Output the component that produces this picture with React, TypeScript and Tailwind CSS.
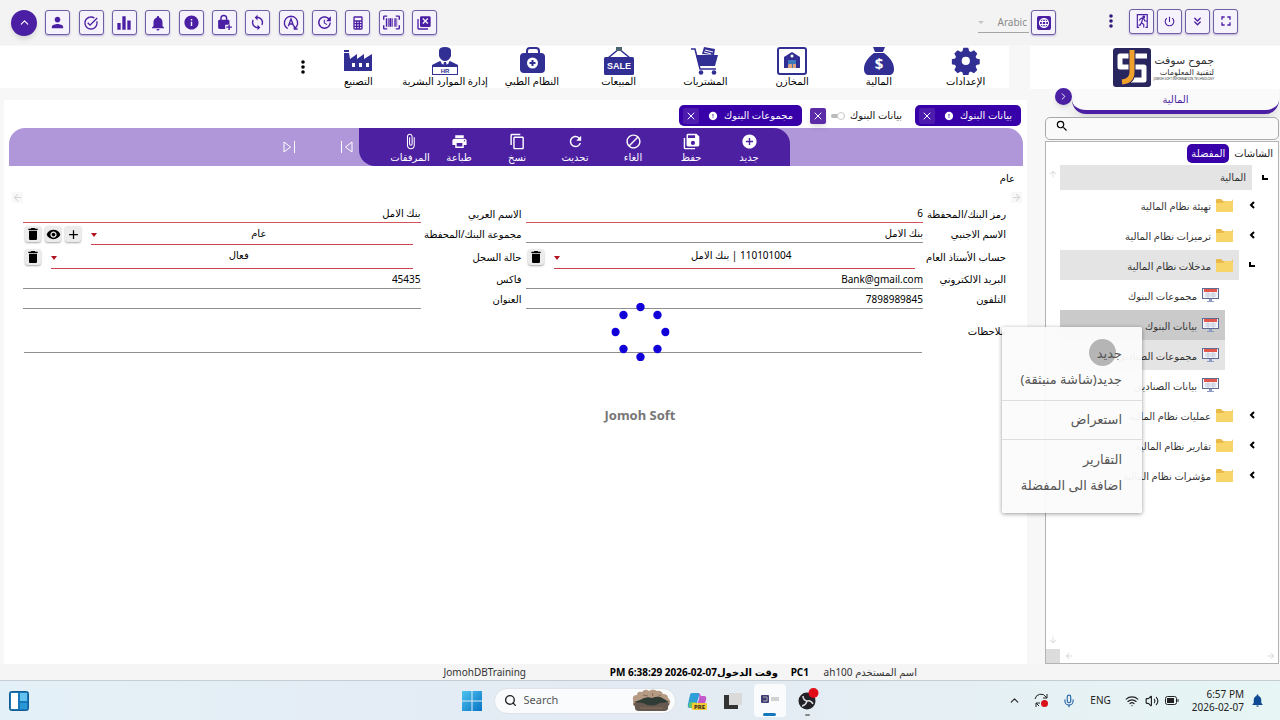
import type { ReactNode } from "react";
import {
    MdAdd,
    MdAddCircle,
    MdArrowBack,
    MdArrowDownward,
    MdArrowForward,
    MdArrowUpward,
    MdAttachFile,
    MdBlock,
    MdContentCopy,
    MdDelete,
    MdEqualizer,
    MdFullscreen,
    MdInfo,
    MdLanguage,
    MdNotifications,
    MdPerson,
    MdPowerSettingsNew,
    MdPrint,
    MdRefresh,
    MdSearch,
    MdSync,
    MdTaskAlt,
    MdUpdate,
    MdVisibility,
} from "react-icons/md";
import { ChevronRight, ChevronsDown, ChevronUp, Mic, Search, Volume2, Wifi, X } from "lucide-react";

function Glyph({ d, size = 16 }: { d: string; size?: number }) {
    return (
        <svg width={size} height={size} viewBox="0 0 24 24" fill="currentColor" fillRule="evenodd" aria-hidden="true">
            <path d={d} />
        </svg>
    );
}

const lockPlus =
    "M17 8h-1V6A5 5 0 0 0 6 6v2H5a2 2 0 0 0-2 2v9a2 2 0 0 0 2 2h8v-6h6v-5a2 2 0 0 0-2-2zM8 8V6a3 3 0 0 1 6 0v2zM17.500 14.500v3h-3v2h3v3h2v-3h3v-2h-3v-3z";
const calculator =
    "M7 2H17A2 2 0 0 1 19 4V20A2 2 0 0 1 17 22H7A2 2 0 0 1 5 20V4A2 2 0 0 1 7 2M7 4V8H17V4H7M7 10V12H9V10H7M11 10V12H13V10H11M15 10V12H17V10H15M7 14V16H9V14H7M11 14V16H13V14H11M15 14V16H17V14H15M7 18V20H9V18H7M11 18V20H13V18H11M15 18V20H17V18H15Z";
const barcode =
    "M4 6H6V18H4V6M7 6H8V18H7V6M9 6H12V18H9V6M13 6H14V18H13V6M16 6H18V18H16V6M19 6H20V18H19V6M2 4V8H0V4A2 2 0 0 1 2 2H6V4H2M22 2A2 2 0 0 1 24 4V8H22V4H18V2H22M2 16V20H6V22H2A2 2 0 0 1 0 20V16H2M22 20V16H24V20A2 2 0 0 1 22 22H18V20H22Z";
const closeAll =
    "M4 20H18V22H4A2 2 0 0 1 2 20V6H4V20M20 2H8A2 2 0 0 0 6 4V16A2 2 0 0 0 8 18H20A2 2 0 0 0 22 16V4A2 2 0 0 0 20 2M18.500 12.100L17.100 13.500L14 10.400L10.900 13.500L9.500 12.100L12.600 9L9.500 5.900L10.900 4.500L14 7.600L17.100 4.500L18.500 5.900L15.400 9Z";
const saveAll =
    "M1 7H3V21H17V23H3A2 2 0 0 1 1 21V7M19 1H7A2 2 0 0 0 5 3V17A2 2 0 0 0 7 19H21A2 2 0 0 0 23 17V5L19 1M14 17A3 3 0 1 1 14 11A3 3 0 0 1 14 17M17 7H7V3H17V7Z";

function AutoIcon() {
    return (
        <svg width={16} height={16} viewBox="0 0 24 24" fill="none" stroke="currentColor" strokeWidth={2} aria-hidden="true">
            <path d="M7 20.500A10 10 0 1 1 17 20.500M17 16v5h5M8 17l4-11 4 11M9.500 13.500h5" />
        </svg>
    );
}

function ExitIcon() {
    return (
        <svg width={12} height={14} viewBox="0 0 20 24" fill="none" stroke="currentColor" strokeWidth={2} aria-hidden="true">
            <path d="M2 23V1h17v22M1 23h4M16 23h4M5 11l4-4 4 1 2 4h3M11 9l-2 6 4 3v5M9 15l-2 4H4" />
            <circle cx={13} cy={5} r={1.500} fill="currentColor" />
        </svg>
    );
}

const quickActions = [
    { name: "User", icon: <MdPerson size={17} /> },
    { name: "Approvals", icon: <MdTaskAlt size={16} /> },
    { name: "Statistics", icon: <MdEqualizer size={20} /> },
    { name: "Alerts", icon: <MdNotifications size={18} /> },
    { name: "Information", icon: <MdInfo size={17} /> },
    { name: "Permissions", icon: <Glyph d={lockPlus} size={17} /> },
    { name: "Sync", icon: <MdSync size={17} /> },
    { name: "Automatic", icon: <AutoIcon /> },
    { name: "Update", icon: <MdUpdate size={17} /> },
    { name: "Calculator", icon: <Glyph d={calculator} /> },
    { name: "Barcode", icon: <Glyph d={barcode} size={17} /> },
    { name: "Close all", icon: <Glyph d={closeAll} /> },
];

const windowActions = [
    { name: "Exit", icon: <ExitIcon /> },
    { name: "Power", icon: <MdPowerSettingsNew size={13} /> },
    { name: "Collapse", icon: <ChevronsDown size={13} strokeWidth={2.5} /> },
    { name: "Full screen", icon: <MdFullscreen size={16} /> },
];

function SquareButton({ name, children }: { name: string; children: ReactNode }) {
    return (
        <button
            aria-label={name}
            className="flex size-[25px] shrink-0 items-center justify-center rounded-[3px] border border-[#6d60a3] bg-[#f6f2fc] text-[#4b1fa3] shadow-[0_1px_2px_rgba(75,31,163,.35)]"
        >
            {children}
        </button>
    );
}

function Dots({ className }: { className: string }) {
    return (
        <button aria-label="More" className={`flex w-6 shrink-0 items-center justify-center ${className}`}>
            <svg width={4} height={14} viewBox="0 0 4 14" fill="currentColor">
                <circle cx={2} cy={2} r={1.800} />
                <circle cx={2} cy={7} r={1.800} />
                <circle cx={2} cy={12} r={1.800} />
            </svg>
        </button>
    );
}

function TopBar() {
    return (
        <header className="flex h-[45px] shrink-0 items-center justify-between bg-[#f3f3f3] pr-[42px] pl-[11px]">
            <div className="flex w-[426px] items-center justify-between">
                <button
                    aria-label="Collapse menu"
                    className="flex size-[26px] items-center justify-center rounded-full bg-[#4b1fa3] text-white shadow-md"
                >
                    <ChevronUp size={13} />
                </button>
                {quickActions.map((action) => (
                    <SquareButton key={action.name} name={action.name}>
                        {action.icon}
                    </SquareButton>
                ))}
            </div>
            <div className="flex items-center">
                <div className="flex h-[21px] w-[51px] items-center border-b border-[#a5a5a5] pr-[2px]">
                    <svg width={6} height={3} viewBox="0 0 8 4" className="shrink-0 fill-[#c4c4c4]">
                        <path d="M0 0h8L4 4z" />
                    </svg>
                    <select aria-label="Language" className="w-full appearance-none bg-transparent text-right text-[10px] text-[#8a8a8a] [text-align-last:right]">
                        <option>Arabic</option>
                    </select>
                </div>
                <div className="mr-[43px] ml-[2px]">
                    <SquareButton name="Change language">
                        <span className="rounded-xs bg-[#4b1fa3] p-px text-white">
                            <MdLanguage size={12} />
                        </span>
                    </SquareButton>
                </div>
                <Dots className="mr-[6px] pb-[3px] text-[#31197c]" />
                <div className="flex gap-[3px] pb-[3px]">
                    {windowActions.map((action) => (
                        <SquareButton key={action.name} name={action.name}>
                            {action.icon}
                        </SquareButton>
                    ))}
                </div>
            </div>
        </header>
    );
}

const modules = [
    {
        name: "الإعدادات",
        icon: (
            <g fill="#312e94">
                <path
                    fillRule="evenodd"
                    d="M12 1h6l1 4 2 1 4-2 4 4-2 4 1 2 4 1v6l-4 1-1 2 2 4-4 4-4-2-2 1-1 4h-6l-1-4-2-1-4 2-4-4 2-4-1-2-4-1v-6l4-1 1-2-2-4 4-4 4 2 2-1zM15 12a5 5 0 1 0 0 10 5 5 0 0 0 0-10z"
                    transform="translate(2.500 1) scale(.82)"
                />
            </g>
        ),
    },
    {
        name: "المالية",
        icon: (
            <g>
                <path fill="#312e94" d="M9 1h12l-2 5h-8zM10 7h10c7 5 10 11 10 16 0 4-2 6-5 6H5c-3 0-5-2-5-6 0-5 3-11 10-16z" />
                <text x={15} y={23} textAnchor="middle" fontSize={15} fontWeight={700} fill="#fff">
                    $
                </text>
            </g>
        ),
    },
    {
        name: "المخازن",
        icon: (
            <g>
                <rect x={1} y={2} width={28} height={26} rx={2} fill="#fff" stroke="#312e94" strokeWidth={2} />
                <path d="M7 22V11l8-5 8 5v11z" fill="#312e94" />
                <path d="M11 22v-8h8v8z" fill="#3f79bb" />
                <circle cx={15} cy={10} r={1.500} fill="#fff" />
                <path d="M12 18h3v4h-4v-3zM16 18h3v4h-3z" fill="#dfa081" />
            </g>
        ),
    },
    {
        name: "المشتريات",
        icon: (
            <g fill="#312e94">
                <path d="M12 8l2-7 11 2-1 6z" />
                <path d="M15 4l8 2M14 6l7 2" stroke="#fff" strokeWidth={1} />
                <path d="M6 9h22l-3 11H9z" />
                <path d="M1 3h4l5 20h16" fill="none" stroke="#312e94" strokeWidth={1.500} />
                <circle cx={11} cy={26.500} r={2.300} />
                <circle cx={24} cy={26.500} r={2.300} />
            </g>
        ),
    },
    {
        name: "المبيعات",
        icon: (
            <g>
                <path d="M4 12L15 3l11 9" fill="none" stroke="#312e94" strokeWidth={1.500} />
                <rect x={12} y={1} width={6} height={4} fill="#4f6472" />
                <rect x={0} y={11} width={30} height={18} rx={1.500} fill="#312e94" />
                <text x={15} y={23} textAnchor="middle" fontSize={9} fontWeight={700} fill="#fff" fontFamily="Liberation Sans">
                    SALE
                </text>
            </g>
        ),
    },
    {
        name: "النظام الطبي",
        icon: (
            <g>
                <path d="M10 8V5a3 3 0 0 1 3-3h6a3 3 0 0 1 3 3v3" fill="none" stroke="#312e94" strokeWidth={2} />
                <rect x={3} y={7} width={25} height={20} rx={4} fill="#312e94" />
                <circle cx={15.500} cy={17} r={5.500} fill="#fff" />
                <path d="M15.500 14v6M12.500 17h6" stroke="#312e94" strokeWidth={2} />
            </g>
        ),
    },
    {
        name: "إدارة الموارد البشرية",
        icon: (
            <g fill="#312e94">
                <path d="M9 5q0-4 6-4t6 4v5q-2 5-6 5T9 10z" />
                <path d="M2 29V19l8-4 5 4 5-4 8 4v10z" />
                <path d="M12 15l3 2 3-2 1 2-4 3-4-3z" fill="#fff" />
                <path d="M14 16h2l1 4h-4z" />
                <rect x={3} y={21} width={24} height={7} fill="#fff" />
                <text x={15} y={27} textAnchor="middle" fontSize={6} fontWeight={700} fontFamily="Liberation Sans">
                    HR
                </text>
            </g>
        ),
    },
    {
        name: "التصنيع",
        icon: (
            <g>
                <path d="M1 4h5v2H1zM1 7h5l1 6 7-5v5l7-5v5l8-5v17H1z" fill="#312e94" />
                <path d="M9 17h3v4H9zM16 17h3v4h-3zM23 17h3v4h-3z" fill="#fff" />
            </g>
        ),
    },
];

function ModuleNav() {
    return (
        <nav className="mr-[19px] flex h-[42px] shrink-0 bg-white">
            <div className="flex w-[694px]">
                {modules.map((item) => (
                    <a key={item.name} href="#" className="flex w-0 flex-1 flex-col items-center text-[10px] whitespace-nowrap text-black">
                        <svg width={30} height={29} viewBox="0 0 30 29" className="shrink-0">
                            {item.icon}
                        </svg>
                        <span className="leading-[12px]">{item.name}</span>
                    </a>
                ))}
            </div>
            <Dots className="text-black" />
        </nav>
    );
}

const tabs = [
    { name: "بيانات البنوك", active: true },
    { name: "بيانات البنوك", active: false },
    { name: "مجموعات البنوك", active: true },
];

function PageTabs() {
    return (
        <div className="flex h-[28px] items-end gap-[8px] px-[6px] pb-[2px]">
            {tabs.map((tab, i) => (
                <div
                    key={i}
                    className={
                        tab.active
                            ? "flex h-[21px] items-center gap-[6px] rounded-[5px] bg-[#3700a8] pr-[9px] pl-[4px] text-[10px] text-white"
                            : "mr-[5px] flex h-[21px] items-center gap-[5px] text-[10px] text-[#111]"
                    }
                >
                    <span>{tab.name}</span>
                    {tab.active ? (
                        <MdInfo size={10} className="rotate-180" />
                    ) : (
                        <span className="flex h-[4px] w-[14px] items-center rounded-full bg-[#bbb]">
                            <span className="size-[8px] rounded-full border border-[#ccc] bg-white" />
                        </span>
                    )}
                    <button
                        aria-label="إغلاق"
                        className={
                            tab.active
                                ? "mr-[3px] flex size-[16px] items-center justify-center rounded-xs bg-[#4d1bae] text-white"
                                : "flex size-[16px] items-center justify-center rounded-xs bg-[#5c2ba8] text-white shadow-md"
                        }
                    >
                        <X size={12} />
                    </button>
                </div>
            ))}
        </div>
    );
}

const tools = [
    { name: "جديد", icon: <MdAddCircle size={17} />, className: "w-[58px]" },
    { name: "حفظ", icon: <Glyph d={saveAll} size={17} />, className: "w-[58px]" },
    { name: "الغاء", icon: <MdBlock size={17} />, className: "w-[58px]" },
    { name: "تحديث", icon: <MdRefresh size={17} />, className: "w-[58px]" },
    { name: "نسخ", icon: <MdContentCopy size={17} />, className: "w-[58px]" },
    { name: "طباعة", icon: <MdPrint size={17} />, className: "w-[58px]" },
    { name: "المرفقات", icon: <MdAttachFile size={17} />, className: "w-[40px]" },
];

function Toolbar() {
    return (
        <div className="mr-[4px] ml-[5px] flex h-[38px] rounded-t-[16px] bg-[#b097d9] text-white">
            <div className="mr-[233px] flex rounded-tr-[16px] rounded-bl-[16px] bg-[#4d20a2] pr-3 pl-[31px]">
                {tools.map((tool) => (
                    <button
                        key={tool.name}
                        className={`flex flex-col items-center justify-center pt-[2px] text-[10px] whitespace-nowrap text-white ${tool.className}`}
                    >
                        {tool.icon}
                        <span className="leading-[14px]">{tool.name}</span>
                    </button>
                ))}
            </div>
            <button aria-label="السابق" className="flex w-[24px] items-center justify-center">
                <svg width={14} height={14} viewBox="0 0 14 14" fill="none" stroke="#fff">
                    <path d="M1.500 1v12M12 2v10L5.500 7z" />
                </svg>
            </button>
            <button aria-label="التالي" className="mr-[34px] flex w-[24px] items-center justify-center">
                <svg width={14} height={14} viewBox="0 0 14 14" fill="none" stroke="#fff">
                    <path d="M12.500 1v12M2 2v10l6.500-5z" />
                </svg>
            </button>
        </div>
    );
}

function SmallButton({ name, children }: { name: string; children: ReactNode }) {
    return (
        <button
            aria-label={name}
            className="flex size-[16px] shrink-0 items-center justify-center rounded-[3px] bg-[#ececec] text-black shadow-[0_1px_2px_rgba(0,0,0,.35)]"
        >
            {children}
        </button>
    );
}

function SelectField({ id, value, buttons }: { id: string; value: string; buttons: ReactNode }) {
    return (
        <div className="flex h-full items-center pr-[8px] pl-[2px]">
            <div className="relative h-full flex-1 border-b border-[#c9444f]">
                <select id={id} className="block h-[20px] w-full appearance-none bg-transparent pl-[14px] text-[10px] leading-[14px] [text-align-last:center]">
                    <option>{value}</option>
                </select>
                <svg width={6} height={4} viewBox="0 0 6 4" className="pointer-events-none absolute top-1/2 left-0 -mt-px fill-[#b1121f]">
                    <path d="M0 0h6L3 4z" />
                </svg>
            </div>
            {buttons}
        </div>
    );
}

function TextField({ id, value, required, ltr }: { id: string; value: string; required?: boolean; ltr?: boolean }) {
    return (
        <input
            id={id}
            defaultValue={value}
            dir={ltr ? "ltr" : "rtl"}
            className={`block h-full w-full border-b bg-transparent text-right text-[10px] outline-none ${required ? "border-[#d3525c] pb-px" : "border-[#8f8f8f]"}`}
        />
    );
}

function Label({ htmlFor, second, children }: { htmlFor: string; second?: boolean; children: ReactNode }) {
    return (
        <label htmlFor={htmlFor} className={`flex items-center text-[10px] whitespace-nowrap ${second ? "pr-[4px]" : ""}`}>
            {children}
        </label>
    );
}

function BankForm() {
    return (
        <form className="pr-[21px] pl-[19px] text-black">
            <div className="grid grid-cols-[83px_1fr_105px_1fr] grid-rows-[18px_22px_24px_20px_20px_44px]">
                <Label htmlFor="code">رمز البنك/المحفظة</Label>
                <TextField id="code" value="6" required />
                <Label htmlFor="name-ar" second>الاسم العربي</Label>
                <TextField id="name-ar" value="بنك الامل" required />

                <Label htmlFor="name-en">الاسم الاجنبي</Label>
                <div className="h-[20px]">
                    <TextField id="name-en" value="بنك الامل" />
                </div>
                <Label htmlFor="group" second>مجموعة البنك/المحفظة</Label>
                <SelectField
                    id="group"
                    value="عام"
                    buttons={
                        <div className="mr-[10px] flex gap-[4px]">
                            <SmallButton name="إضافة"><MdAdd size={15} /></SmallButton>
                            <SmallButton name="عرض"><MdVisibility size={15} /></SmallButton>
                            <SmallButton name="حذف"><MdDelete size={16} /></SmallButton>
                        </div>
                    }
                />

                <Label htmlFor="account">حساب الأستاذ العام</Label>
                <SelectField
                    id="account"
                    value="110101004 | بنك الامل"
                    buttons={<div className="mr-[10px]"><SmallButton name="حذف"><MdDelete size={16} /></SmallButton></div>}
                />
                <Label htmlFor="status" second>حالة السجل</Label>
                <SelectField
                    id="status"
                    value="فعال"
                    buttons={<div className="mr-[10px]"><SmallButton name="حذف"><MdDelete size={16} /></SmallButton></div>}
                />

                <Label htmlFor="email">البريد الالكتروني</Label>
                <TextField id="email" value="Bank@gmail.com" ltr />
                <Label htmlFor="fax" second>فاكس</Label>
                <TextField id="fax" value="45435" ltr />

                <Label htmlFor="phone">التلفون</Label>
                <TextField id="phone" value="7898989845" ltr />
                <Label htmlFor="address" second>العنوان</Label>
                <TextField id="address" value="" />

                <Label htmlFor="notes">ملاحظات</Label>
                <textarea id="notes" className="col-span-3 mx-px resize-none border-b border-[#8f8f8f] bg-transparent text-[10px] outline-none" />
            </div>
        </form>
    );
}

function Folder() {
    return (
        <svg width={17} height={15} viewBox="0 0 17 15" className="shrink-0">
            <path d="M0 2a1 1 0 0 1 1-1h4l2 2h9l1-2v12a1 1 0 0 1-1 1H1a1 1 0 0 1-1-1z" fill="#e9b949" />
            <path d="M0 5h7l2-2h7a1 1 0 0 1 1 1v9a1 1 0 0 1-1 1H1a1 1 0 0 1-1-1z" fill="#f8d568" />
        </svg>
    );
}

function Screen() {
    return (
        <svg width={17} height={15} viewBox="0 0 17 15" className="shrink-0">
            <rect x={0.500} y={0.500} width={16} height={10} fill="#f3f5fa" stroke="#5f6b92" />
            <path d="M2 1h13v3H2z" fill="#e2574c" />
            <path d="M3 6h11M3 8h11M6 4v6M11 4v6" stroke="#c3cbdd" />
            <path d="M7 11h3v2H7zM5 13h7v1H5z" fill="#8b9bc4" />
        </svg>
    );
}

const tree = [
    { name: "تهيئة نظام المالية", leaf: false, open: false, bg: "" },
    { name: "ترميزات نظام المالية", leaf: false, open: false, bg: "" },
    { name: "مدخلات نظام المالية", leaf: false, open: true, bg: "bg-[#e4e4e4]" },
    { name: "مجموعات البنوك", leaf: true, open: false, bg: "" },
    { name: "بيانات البنوك", leaf: true, open: false, bg: "bg-[#cacaca]" },
    { name: "مجموعات الصناديق", leaf: true, open: false, bg: "bg-[#e4e4e4]" },
    { name: "بيانات الصناديق", leaf: true, open: false, bg: "" },
    { name: "عمليات نظام المالية", leaf: false, open: false, bg: "" },
    { name: "تقارير نظام المالية", leaf: false, open: false, bg: "" },
    { name: "مؤشرات نظام المالية", leaf: false, open: false, bg: "" },
];

function TreeArrow({ open }: { open: boolean }) {
    return (
        <svg width={6} height={8} viewBox="0 0 6 8" fill="none" stroke="#000" strokeWidth={2}>
            {open ? <path d="M1 1v4h5" /> : <path d="M5 1L2 4l3 3" />}
        </svg>
    );
}

function Sidebar() {
    return (
        <aside className="flex w-[250px] shrink-0 flex-col text-[#333]">
            <div className="flex h-[43px] items-center bg-white pr-[66px] pb-px">
                <div className="flex w-[60px] flex-col items-start whitespace-nowrap text-[#333]">
                    <span className="text-[11px] leading-[14px]">جموح سوفت</span>
                    <span className="text-[8px] leading-[10px]">لتقنية المعلومات</span>
                    <span dir="ltr" className="text-[3px] leading-[5px]">JOMOH SOFT INFORMATION TECHNOLOGY</span>
                </div>
                <svg width={38} height={39} viewBox="0 0 38 39" className="mr-[3px] shrink-0">
                    <rect width={38} height={39} rx={3} fill="#29265f" />
                    <path d="M34 8H7v11h9M20 19h11v13H18" fill="none" stroke="#fff" strokeWidth={5} strokeLinejoin="round" />
                    <path d="M19 2v22q0 9-10 9" fill="none" stroke="#29265f" strokeWidth={7} />
                    <path d="M19 2v22q0 9-10 10" fill="none" stroke="#f0a12c" strokeWidth={5} />
                </svg>
            </div>
            <div className="relative pr-px pl-[42px]">
                <button className="block h-[25px] w-full rounded-b-[14px] border-b-4 border-[#4b1fa3] bg-[#fafafa] text-[10px] text-[#4b1fa3] shadow-lg">
                    المالية
                </button>
                <button
                    aria-label="إخفاء القائمة"
                    className="absolute -top-px left-[25px] flex size-[17px] items-center justify-center rounded-full bg-[#4b1fa3] text-white shadow-md"
                >
                    <ChevronRight size={11} />
                </button>
            </div>
            <div className="relative mt-[3px] mr-px ml-[15px]">
                <input
                    aria-label="بحث"
                    className="block h-[23px] w-full rounded-[5px] border border-[#a5a9a9] bg-[#fafafa] pl-7 text-[10px] outline-none"
                />
                <MdSearch size={14} className="absolute top-[2px] left-[10px] text-black" />
            </div>
            <div className="mt-px mr-px ml-[15px] flex flex-1 flex-col border border-[#b3b3b3] bg-white">
                <div className="flex h-[23px] items-center gap-[5px] pr-[5px] text-[10px] text-[#222]">
                    <button>الشاشات</button>
                    <button className="h-[19px] rounded-[5px] bg-[#3700a8] px-[4px] text-white">المفضلة</button>
                </div>
                <div className="flex flex-1">
                    <ul className="flex-1 text-[10px]">
                        <li className="flex items-center">
                            <span className="flex w-[26px] justify-center"><TreeArrow open /></span>
                            <a href="#" className="flex h-[25px] flex-1 items-center bg-[#e4e4e4] pr-[6px]">المالية</a>
                        </li>
                        {tree.map((node, i) => (
                            <li key={i} className="flex items-center">
                                <span className={node.leaf ? "w-[53px] shrink-0" : "flex w-[39px] shrink-0 justify-center pr-[13px]"}>
                                    {!node.leaf && <TreeArrow open={node.open} />}
                                </span>
                                <a href="#" className={`flex h-[30px] flex-1 items-center gap-[5px] pr-[6px] whitespace-nowrap ${node.bg}`}>
                                    {node.leaf ? <Screen /> : <Folder />}
                                    <span className="pt-[2px]">{node.name}</span>
                                </a>
                            </li>
                        ))}
                    </ul>
                    <div className="flex w-[14px] flex-col items-center justify-between py-1 text-[#d8d8d8]">
                        <MdArrowUpward size={10} />
                        <MdArrowDownward size={10} />
                    </div>
                </div>
                <div className="flex h-[14px] items-center justify-between pr-[2px] text-[#d8d8d8]">
                    <MdArrowForward size={10} />
                    <span className="flex items-center gap-[4px]">
                        <MdArrowBack size={10} />
                        <span className="h-[14px] w-[14px] bg-[#dcdcdc]" />
                    </span>
                </div>
            </div>
        </aside>
    );
}

const menuGroups = [["جديد", "جديد(شاشة منبثقة)"], ["استعراض"], ["التقارير", "اضافة الى المفضلة"]];

function ContextMenu() {
    return (
        <div className="absolute top-[327px] right-[138px] w-[140px] rounded-xs bg-[#fbfbfb]/95 pt-[14px] pb-[14px] text-[13px] text-[#555] shadow-[0_1px_4px_rgba(0,0,0,.4)]">
            <span className="absolute top-[12px] right-[26px] size-[27px] rounded-full bg-[#b5b5b5]" />
            {menuGroups.map((group, i) => (
                <div key={i} className={i === 0 ? "pb-[7px]" : i === 1 ? "border-y border-[#dedede] py-[6px]" : "pt-[7px]"}>
                    {group.map((item) => (
                        <button key={item} className="relative block h-[26px] w-full pr-[20px] text-right whitespace-nowrap">
                            {item}
                        </button>
                    ))}
                </div>
            ))}
        </div>
    );
}

const spinnerDots = [
    [29, 4],
    [46, 12],
    [54, 29],
    [46, 46],
    [29, 54],
    [12, 46],
    [4, 29],
    [12, 12],
];

function Loader() {
    return (
        <div className="pointer-events-none absolute top-[303px] left-1/2 flex -translate-x-1/2 flex-col items-center">
            <svg width={58} height={58} viewBox="0 0 58 58" fill="#1200d8">
                {spinnerDots.map(([x, y]) => (
                    <circle key={`${x}-${y}`} cx={x} cy={y} r={4.200} />
                ))}
            </svg>
            <span className="mt-[45px] text-[13px] leading-[18px] font-bold text-[#777]">Jomoh Soft</span>
        </div>
    );
}

function StatusBar() {
    return (
        <footer dir="rtl" className="flex h-[17px] shrink-0 items-center border-b border-[#c5cdd2] bg-[#f5f5f5] pr-[363px] text-[10px] whitespace-nowrap text-[#333]">
            <span className="w-[108px]">اسم المستخدم ah100</span>
            <span className="w-[31px] font-bold text-black">PC1</span>
            <span className="w-[252px] font-bold text-black">
                وقت الدخول<bdi dir="ltr">PM 6:38:29 2026-02-07</bdi>
            </span>
            <span>JomohDBTraining</span>
        </footer>
    );
}

function Taskbar() {
    return (
        <div className="flex h-[39px] shrink-0 items-center bg-linear-to-r from-[#e4f0f7] via-[#e3eaf3] to-[#e7f5f4] text-[11px] text-[#222]">
            <div className="flex-1">
                <button aria-label="Widgets" className="ml-[9px] block">
                    <svg width={20} height={20} viewBox="0 0 20 20">
                        <rect x={0.500} y={0.500} width={19} height={19} rx={2} fill="#1976b8" stroke="#135c91" />
                        <rect x={2} y={2} width={7} height={16} fill="#fff" />
                        <rect x={11} y={2} width={7} height={8} fill="#64c3ee" />
                        <rect x={11} y={12} width={7} height={6} fill="#2b98d6" />
                    </svg>
                </button>
            </div>
            <div className="flex items-center">
                <button aria-label="Start">
                    <svg width={20} height={20} viewBox="0 0 20 20">
                        <defs>
                            <linearGradient id="win" x1="0" y1="0" x2="1" y2="1">
                                <stop offset="0" stopColor="#4cc4ef" />
                                <stop offset="1" stopColor="#0872c4" />
                            </linearGradient>
                        </defs>
                        <path d="M0 0h9.500v9.500H0zM10.500 0H20v9.500h-9.500zM0 10.500h9.500V20H0zM10.500 10.500H20V20h-9.500z" fill="url(#win)" />
                    </svg>
                </button>
                <label className="mr-[11px] ml-[12px] flex h-[26px] w-[182px] items-center rounded-full border border-[#dde3e8] bg-[#f9fbfd] pr-[4px] pl-[9px]">
                    <Search size={13} strokeWidth={2.5} className="shrink-0" />
                    <input placeholder="Search" className="ml-[7px] w-0 flex-1 bg-transparent text-[11px] outline-none placeholder:text-[#555]" />
                    <svg width={39} height={23} viewBox="0 0 39 23" className="shrink-0">
                        <path d="M1 11q-1-5 4-5 0-4 5-3 3-4 7-1 4-3 8 0 4-1 6 3 5 0 5 4 4 3 1 7l-4 3H5l-4-3z" fill="#b59a84" />
                        <path d="M4 13q-4 2-1 4-1 5 4 5h25q5 0 4-5 3-2-1-4z" fill="#665a50" />
                        <path d="M2 13l6-2q6-4 12-2 7-3 12 1l5 3-9 1q-8 5-17 0z" fill="#303c36" />
                        <path d="M11 6l5 1M20 4l1 3M29 6l-4 2M8 19h23" stroke="#8b6c59" />
                    </svg>
                </label>
                <button aria-label="Copilot">
                    <svg width={20} height={20} viewBox="0 0 20 20">
                        <path d="M5 2h6q2 0 1 3L9 15q-1 2-3 2H3q-3 0-2-4L3 4q0-2 2-2z" fill="#2e9fd8" />
                        <path d="M3 11h6l-1 4q-1 3-4 2-3 0-2-4z" fill="#67c26b" />
                        <path d="M11 2q2 0 3 3h3q3 0 2 4l-2 6q-1 2-3 2H9l3-9q1-4-1-6z" fill="#c258cc" />
                        <rect x={5} y={12} width={15} height={7} rx={1} fill="#f6cb38" />
                        <text x={12.500} y={18} textAnchor="middle" fontSize={6} fontWeight={700} fill="#222">PRE</text>
                    </svg>
                </button>
                <button aria-label="Task view" className="ml-[16px]">
                    <svg width={20} height={20} viewBox="0 0 20 20">
                        <rect x={1} y={4} width={14} height={14} fill="#333" />
                        <rect x={6} y={2} width={13} height={12} fill="#dadada" />
                    </svg>
                </button>
                <button aria-label="Jomoh Soft" className="ml-[11px] flex h-[33px] w-[32px] flex-col items-center justify-end rounded-sm bg-[#f9fbfd]">
                    <svg width={18} height={8} viewBox="0 0 18 8" className="mb-[10px]">
                        <rect width={8} height={8} rx={1} fill="#403d74" />
                        <path d="M2 2h4v4H2M10 3h8M10 5h8" stroke="#aaa" fill="none" />
                    </svg>
                    <span className="mb-px h-[3px] w-[13px] rounded-full bg-[#1677bd]" />
                </button>
                <button aria-label="OBS Studio" className="ml-[11px] flex h-[33px] flex-col items-center justify-end">
                    <svg width={22} height={22} viewBox="0 0 22 22" className="mb-[4px]">
                        <circle cx={10} cy={13} r={8.500} fill="#222126" />
                        <path d="M10 13q-4-1-4-5M10 13q4-1 6 3M10 13q-1 4-5 5" fill="none" stroke="#ddd" strokeWidth={1.500} />
                        <circle cx={16.500} cy={5} r={5} fill="#e00d18" />
                    </svg>
                    <span className="mb-px h-[2px] w-[5px] rounded-full bg-[#888]" />
                </button>
            </div>
            <div className="flex flex-1 items-center justify-end">
                <ChevronUp size={13} className="mr-[13px]" />
                <svg width={15} height={15} viewBox="0 0 15 15" className="mr-[13px]">
                    <path d="M1 6a6 6 0 0 1 11-2l1 1M13 1v4H9M5 13L2 10v4M2 10h4" fill="none" stroke="#222" />
                    <circle cx={10.500} cy={10.500} r={3.500} fill="#d8101a" />
                </svg>
                <Mic size={14} className="mr-[14px] text-[#2d67a8]" />
                <span className="mr-[14px] text-[10px]">ENG</span>
                <Wifi size={14} className="mr-[6px]" />
                <Volume2 size={14} className="mr-[6px]" />
                <svg width={14} height={9} viewBox="0 0 14 9" className="mr-[13px]">
                    <rect x={0.500} y={0.500} width={11} height={8} rx={2} fill="none" stroke="#222" />
                    <path d="M2 2h7v5H2zM12.500 3h1v3h-1z" fill="#222" />
                </svg>
                <div className="mr-[6px] text-right text-[10px] leading-[13px]">
                    <div>6:57 PM</div>
                    <div>2026-02-07</div>
                </div>
                <MdNotifications size={15} className="mr-[15px] text-[#104a95]" />
            </div>
        </div>
    );
}

export default function App() {
    return (
        <div className="relative flex min-h-screen flex-col bg-[#f7f7f7] font-['Noto_Sans','DejaVu_Sans',sans-serif]">
            <TopBar />
            <div dir="rtl" className="flex flex-1 pt-px">
                <Sidebar />
                <div className="flex min-w-0 flex-1 flex-col pr-[2px]">
                    <ModuleNav />
                    <main className="mt-[12px] mr-px ml-[4px] flex-1 bg-white">
                        <PageTabs />
                        <Toolbar />
                        <h2 className="mt-[5px] pr-[12px] text-[10px] leading-[14px]">عام</h2>
                        <div className="flex h-[20px] items-end justify-between pr-[5px] pb-[2px] pl-[8px] text-[#d5d5d5]">
                            <MdArrowForward size={11} className="bg-[#f8f8f8]" />
                            <MdArrowBack size={11} className="bg-[#f8f8f8]" />
                        </div>
                        <BankForm />
                    </main>
                </div>
            </div>
            <StatusBar />
            <Taskbar />
            <Loader />
            <ContextMenu />
        </div>
    );
}
